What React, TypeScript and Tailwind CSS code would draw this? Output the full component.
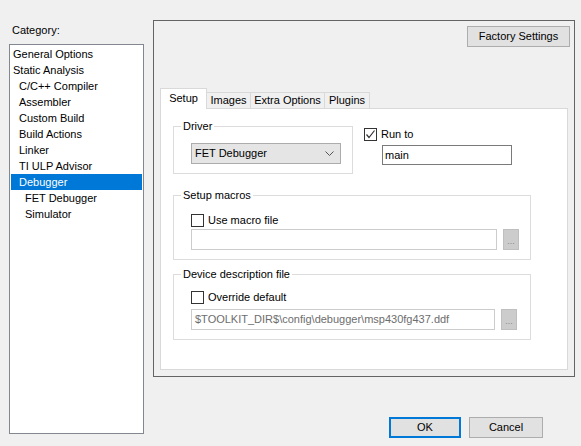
import type { ReactNode } from "react"

const categories: { label: string; level: number }[] = [
  { label: "General Options", level: 0 },
  { label: "Static Analysis", level: 0 },
  { label: "C/C++ Compiler", level: 1 },
  { label: "Assembler", level: 1 },
  { label: "Custom Build", level: 1 },
  { label: "Build Actions", level: 1 },
  { label: "Linker", level: 1 },
  { label: "TI ULP Advisor", level: 1 },
  { label: "Debugger", level: 1 },
  { label: "FET Debugger", level: 2 },
  { label: "Simulator", level: 2 },
]

function CheckBox({ checked = false }: { checked?: boolean }) {
  return (
    <span className="flex h-[13px] w-[13px] shrink-0 items-center justify-center border border-[#333333] bg-white">
      {checked && (
        <svg width="11" height="11" viewBox="0 0 11 11">
          <path d="M1.5 5.5 L4 8.5 L9.5 1.5" fill="none" stroke="#333333" strokeWidth="1.2" />
        </svg>
      )}
    </span>
  )
}

function GroupBox({
  title,
  className,
  children,
}: {
  title: string
  className: string
  children: ReactNode
}) {
  return (
    <div className={`relative border border-[#dcdcdc] ${className}`}>
      <span className="absolute left-[7px] top-[-8px] bg-white px-[2px] leading-[14px]">{title}</span>
      {children}
    </div>
  )
}

function BrowseButton() {
  return (
    <div className="flex h-[21px] w-[16px] items-end justify-center border border-[#bfbfbf] bg-[#cccccc] pb-[3px] text-[9px] leading-[9px] text-[#8a8a8a]">
      ...
    </div>
  )
}

function SetupTab() {
  return (
    <div className="flex h-[262px] w-[408px] flex-col border border-[#d9d9d9] bg-white pl-[12px]">
      <div className="mt-[17px] flex">
        <GroupBox title="Driver" className="h-[48px] w-[180px] pl-[17px] pt-[16px]">
          <div className="flex h-[21px] w-[150px] items-center justify-between border border-[#acacac] bg-[#e5e5e5] pl-[3px] pr-[6px]">
            <span>FET Debugger</span>
            <svg width="9" height="5" viewBox="0 0 9 5">
              <path d="M0.5 0.5 L4.5 4.5 L8.5 0.5" fill="none" stroke="#555555" strokeWidth="1" />
            </svg>
          </div>
        </GroupBox>
        <div className="ml-[11px] mt-[2px] flex flex-col">
          <label className="flex h-[13px] items-center gap-[4px]">
            <CheckBox checked />
            <span>Run to</span>
          </label>
          <div className="ml-[18px] mt-[4px] flex h-[20px] w-[130px] items-center border border-[#7a7a7a] bg-white pl-[2px]">
            main
          </div>
        </div>
      </div>

      <GroupBox title="Setup macros" className="mt-[21px] h-[65px] w-[358px] pl-[17px] pt-[18px]">
        <label className="flex h-[13px] items-center gap-[4px]">
          <CheckBox />
          <span>Use macro file</span>
        </label>
        <div className="mt-[2px] flex gap-[6px]">
          <div className="h-[21px] w-[306px] border border-[#cccccc] bg-white" />
          <BrowseButton />
        </div>
      </GroupBox>

      <GroupBox title="Device description file" className="mt-[14px] h-[66px] w-[358px] pl-[17px] pt-[16px]">
        <label className="flex h-[13px] items-center gap-[4px]">
          <CheckBox />
          <span>Override default</span>
        </label>
        <div className="mt-[5px] flex gap-[6px]">
          <div className="flex h-[21px] w-[304px] items-center border border-[#cccccc] bg-white pl-[3px] text-[#6d6d6d]">
            $TOOLKIT_DIR$\config\debugger\msp430fg437.ddf
          </div>
          <BrowseButton />
        </div>
      </GroupBox>
    </div>
  )
}

export default function App() {
  const tabs = ["Setup", "Images", "Extra Options", "Plugins"]
  const tabWidths = ["w-[47px]", "w-[45px]", "w-[75px]", "w-[46px]"]

  return (
    <div className="flex h-[446px] w-[581px] bg-[#f0f0f0] font-['Liberation_Sans',Arial,sans-serif] text-[11px] text-black">
      {/* category list */}
      <div className="ml-[9px] flex w-[135px] flex-col pt-[20px]">
        <div className="h-[24px] pl-[3px] leading-[20px]">Category:</div>
        <div className="h-[390px] border border-[#828790] bg-white pt-px">
          {categories.map((c) => {
            const selected = c.label === "Debugger"
            const indent = c.level === 0 ? "pl-[2px]" : c.level === 1 ? "pl-[8px]" : "pl-[14px]"
            return (
              <div
                key={c.label}
                className={`mx-px h-[16px] leading-[16px] ${indent} ${selected ? "bg-[#0078d7] text-white" : ""}`}
              >
                {c.label}
              </div>
            )
          })}
        </div>
      </div>

      {/* options page */}
      <div className="ml-[9px] flex flex-col">
        <div className="mt-[20px] flex h-[357px] w-[422px] flex-col border border-[#646464]">
          <div className="flex justify-end pr-[4px] pt-[5px]">
            <button className="h-[21px] w-[103px] border border-[#adadad] bg-[#e1e1e1]">Factory Settings</button>
          </div>
          <div className="mt-[41px] flex flex-col px-[6px]">
            <div className="relative z-10 flex items-end">
              {tabs.map((t, i) => {
                const active = i === 0
                return (
                  <div
                    key={t}
                    className={`flex items-center justify-center border border-b-0 border-[#d9d9d9] ${tabWidths[i]} ${
                      active ? "-mb-px h-[21px] bg-white pb-[2px]" : "-ml-px h-[16px] bg-[#f0f0f0]"
                    }`}
                  >
                    {t}
                  </div>
                )
              })}
            </div>
            <SetupTab />
          </div>
        </div>
        <div className="mt-[40px] flex justify-end gap-[8px] pr-[32px]">
          <button className="h-[21px] w-[72px] border-2 border-[#0078d7] bg-[#e1e1e1]">OK</button>
          <button className="h-[21px] w-[74px] border border-[#adadad] bg-[#e1e1e1]">Cancel</button>
        </div>
      </div>
    </div>
  )
}
